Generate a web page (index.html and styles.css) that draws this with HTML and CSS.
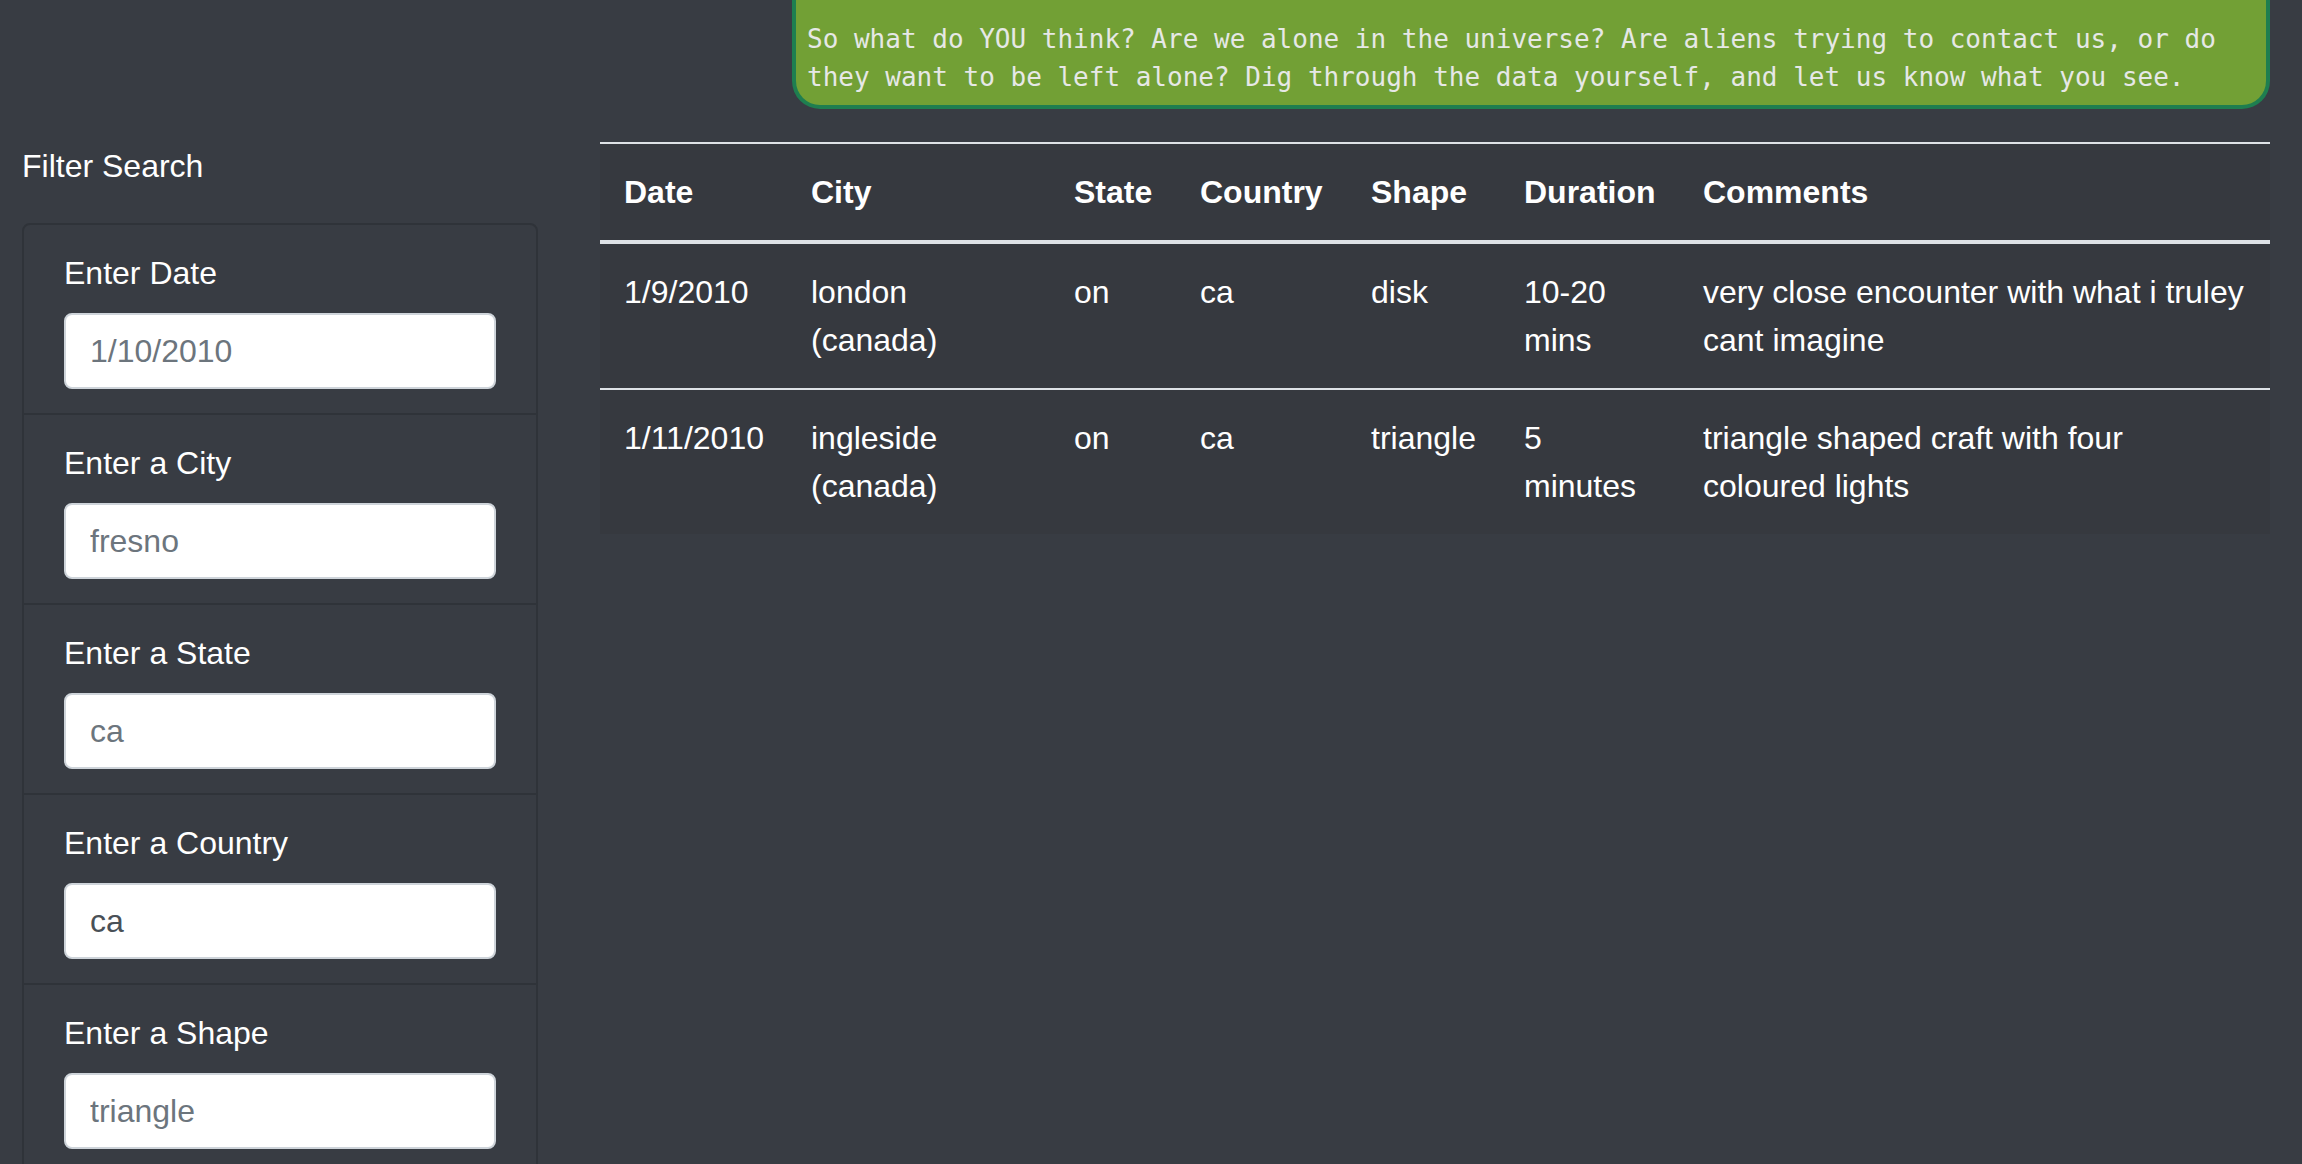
FILE: index.html
```html
<!DOCTYPE html>
<html lang="en">
<head>
<meta charset="utf-8">
<title>UFO Sightings</title>
<link rel="stylesheet" href="styles.css">
</head>
<body>
<div class="hero-row">
  <div class="hero">
    <p class="hero-text">So what do YOU think? Are we alone in the universe? Are aliens trying to contact us, or do they want to be left alone? Dig through the data yourself, and let us know what you see.</p>
  </div>
</div>
<div class="main">
  <aside class="sidebar">
    <h5 class="filter-title">Filter Search</h5>
    <ul class="filter-list">
      <li class="filter-item">
        <label class="filter-label" for="datetime">Enter Date</label>
        <input class="filter-input" id="datetime" type="text" placeholder="1/10/2010">
      </li>
      <li class="filter-item">
        <label class="filter-label" for="city">Enter a City</label>
        <input class="filter-input" id="city" type="text" placeholder="fresno">
      </li>
      <li class="filter-item">
        <label class="filter-label" for="state">Enter a State</label>
        <input class="filter-input" id="state" type="text" placeholder="ca">
      </li>
      <li class="filter-item">
        <label class="filter-label" for="country">Enter a Country</label>
        <input class="filter-input" id="country" type="text" value="ca">
      </li>
      <li class="filter-item">
        <label class="filter-label" for="shape">Enter a Shape</label>
        <input class="filter-input" id="shape" type="text" placeholder="triangle">
      </li>
    </ul>
  </aside>
  <section class="results">
    <table class="ufo-table">
      <colgroup>
        <col class="c-date"><col class="c-city"><col class="c-state"><col class="c-country"><col class="c-shape"><col class="c-duration"><col class="c-comments">
      </colgroup>
      <thead>
        <tr>
          <th>Date</th><th>City</th><th>State</th><th>Country</th><th>Shape</th><th>Duration</th><th>Comments</th>
        </tr>
      </thead>
      <tbody>
        <tr>
          <td>1/9/2010</td><td>london (canada)</td><td>on</td><td>ca</td><td>disk</td><td>10-20 mins</td><td>very close encounter with what i truley cant imagine</td>
        </tr>
        <tr>
          <td>1/11/2010</td><td>ingleside (canada)</td><td>on</td><td>ca</td><td>triangle</td><td>5 minutes</td><td>triangle shaped craft with four coloured lights</td>
        </tr>
      </tbody>
    </table>
  </section>
</div>
</body>
</html>
```

FILE: styles.css
```css
html, body {
  margin: 0;
  padding: 0;
}

body {
  background: #383c43;
  color: #ffffff;
  font-family: "Liberation Sans", Arial, Helvetica, sans-serif;
  font-size: 32px;
  line-height: 48px;
  min-height: 1164px;
  overflow: hidden;
}

.hero-row {
  display: flex;
  justify-content: flex-end;
  padding-right: 32px;
}

.hero {
  width: 1478px;
  box-sizing: border-box;
  background: #72a035;
  border: 4px solid #1e7e50;
  border-top: none;
  border-radius: 0 0 28px 28px;
  padding: 20px 8px 9px 11px;
}

.hero-text {
  margin: 0;
  font-family: "DejaVu Sans Mono", "Liberation Mono", monospace;
  font-size: 26px;
  line-height: 38px;
  color: #e6e8e6;
}

.main {
  display: grid;
  grid-template-columns: 516px 1670px;
  column-gap: 62px;
  padding-left: 22px;
  margin-top: 33px;
  align-items: start;
}

.filter-title {
  margin: 0 0 33px 0;
  font-size: 32px;
  line-height: 48px;
  font-weight: normal;
  color: #ffffff;
}

.filter-list {
  list-style: none;
  margin: 0;
  padding: 0;
  border: 2px solid #2f3339;
  border-radius: 8px;
}

.filter-item {
  padding: 24px 40px;
  border-top: 2px solid #2f3339;
  display: flex;
  flex-direction: column;
}

.filter-item:first-child {
  border-top: none;
}

.filter-label {
  display: block;
  margin-bottom: 16px;
  font-size: 32px;
  line-height: 48px;
  color: #ffffff;
}

.filter-input {
  box-sizing: border-box;
  width: 100%;
  height: 76px;
  padding: 12px 24px;
  border: 2px solid #ced4da;
  border-radius: 8px;
  background: #ffffff;
  font-family: "Liberation Sans", Arial, Helvetica, sans-serif;
  font-size: 32px;
  line-height: 48px;
  color: #495057;
  outline: none;
}

.filter-input::placeholder {
  color: #6c757d;
  opacity: 1;
}

.ufo-table {
  width: 1670px;
  table-layout: fixed;
  border-collapse: collapse;
  background: #36393f;
  color: #ffffff;
}

.c-date { width: 187px; }
.c-city { width: 263px; }
.c-state { width: 126px; }
.c-country { width: 171px; }
.c-shape { width: 153px; }
.c-duration { width: 179px; }
.c-comments { width: 591px; }

.ufo-table th,
.ufo-table td {
  padding: 24px;
  text-align: left;
  vertical-align: top;
  border-top: 2px solid #dee2e6;
  font-size: 32px;
  line-height: 48px;
}

.ufo-table th {
  font-weight: bold;
  border-bottom: 4px solid #dee2e6;
}
```
